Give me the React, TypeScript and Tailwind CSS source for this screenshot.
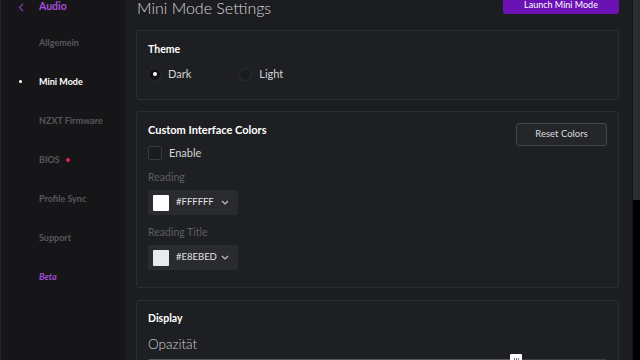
import React from "react";

const NAV = [
  { label: "Allgemein" },
  { label: "Mini Mode", active: true },
  { label: "NZXT Firmware" },
  { label: "BIOS", dot: true },
  { label: "Profile Sync" },
  { label: "Support" },
  { label: "Beta", beta: true },
];

function ColorPicker({ value, swatch }: { value: string; swatch: string }) {
  return (
    <div className="flex items-center h-[25px] w-[90px] bg-[#2a2b2f] rounded-[2px] pl-[5px]">
      <span className="h-[16px] w-[16px] shrink-0 rounded-[1px]" style={{ background: swatch }} />
      <span className="ml-[7px] text-[9.5px] text-[#e2e2e2]">{value}</span>
      <svg className="ml-auto mr-[9px] shrink-0" width="8" height="5" viewBox="0 0 8 5" fill="none">
        <path d="M1 1l3 3 3-3" stroke="#c8c8c8" strokeWidth="1.1" />
      </svg>
    </div>
  );
}

export default function App() {
  return (
    <div
      className="flex h-[360px] w-[640px] overflow-hidden bg-[#1c1d20]"
      style={{ fontFamily: "Lato, 'Open Sans', sans-serif" }}
    >
      {/* Sidebar */}
      <div className="w-[125px] shrink-0 bg-[#161618] border-l border-[#26262a]">
        <div className="flex items-center h-[14px]">
          <svg className="ml-[17px]" width="6" height="9" viewBox="0 0 6 9" fill="none">
            <path d="M5 1L1.5 4.5 5 8" stroke="#7d3bb0" strokeWidth="1.3" />
          </svg>
          <span className="ml-[15px] text-[10.5px] font-bold text-[#a84fdc]">Audio</span>
        </div>
        <div className="mt-[9px] flex flex-col">
          {NAV.map((item) => (
            <div key={item.label} className="relative flex items-center h-[39px] pl-[38px]">
              {item.active && (
                <span className="absolute left-[18px] top-[18px] h-[3px] w-[3px] rounded-full bg-white" />
              )}
              <span
                className={
                  item.active
                    ? "text-[9px] font-bold text-white"
                    : item.beta
                    ? "text-[9px] font-bold italic text-[#a04bd2]"
                    : "text-[9px] font-bold text-[#56585c]"
                }
              >
                {item.label}
              </span>
              {item.dot && <span className="ml-[6px] h-[4px] w-[4px] rounded-full bg-[#e3204d]" />}
            </div>
          ))}
        </div>
      </div>

      {/* Main */}
      <div className="flex-1 pl-[11px] pr-[13px]">
        <div className="-mt-[6px]">
          <div className="flex items-start justify-between h-[26px] mb-[10px]">
            <h1 className="ml-[1px] text-[16px] leading-[28px] font-light text-[#d6d6d6]">Mini Mode Settings</h1>
            <button className="mt-[2px] h-[18px] w-[116px] rounded-[3px] bg-[#6a12b4] text-[9px] text-white">
              Launch Mini Mode
            </button>
          </div>

          {/* Theme */}
          <div className="h-[70px] rounded-[3px] border border-[#2c2d31] bg-[#1e1f22] px-[11px] pt-[11px]">
            <div className="text-[10.5px] leading-[14px] font-bold text-white">Theme</div>
            <div className="mt-[10px] flex items-center h-[16px]">
              <span className="flex items-center justify-center h-[13px] w-[13px] rounded-full bg-[#111113] border border-[#2a2b2e]">
                <span className="h-[4px] w-[4px] rounded-full bg-white" />
              </span>
              <span className="ml-[7px] text-[11px] text-[#d4d4d4]">Dark</span>
              <span className="ml-[48px] h-[13px] w-[13px] rounded-full bg-[#1a1b1d] border border-[#2d2e32]" />
              <span className="ml-[7px] text-[11px] text-[#d4d4d4]">Light</span>
            </div>
          </div>

          {/* Custom Interface Colors */}
          <div className="mt-[11px] h-[177px] rounded-[3px] border border-[#2c2d31] bg-[#1e1f22] px-[11px] pt-[11px]">
            <div className="flex items-start justify-between">
              <div className="text-[11px] leading-[14px] font-bold text-white">Custom Interface Colors</div>
              <button className="h-[23px] w-[91px] rounded-[3px] border border-[#45464a] bg-[#25262a] text-[9.5px] text-[#dadada]">
                Reset Colors
              </button>
            </div>
            <div className="flex items-center h-[14px]">
              <span className="h-[14px] w-[14px] rounded-[2px] border border-[#38393d] bg-[#1a1b1d]" />
              <span className="ml-[7px] text-[11px] text-[#d4d4d4]">Enable</span>
            </div>
            <div className="mt-[10px] text-[10.5px] leading-[14px] text-[#5c5e62]">Reading</div>
            <div className="mt-[6px]">
              <ColorPicker value="#FFFFFF" swatch="#ffffff" />
            </div>
            <div className="mt-[10px] text-[10.5px] leading-[14px] text-[#5c5e62]">Reading Title</div>
            <div className="mt-[6px]">
              <ColorPicker value="#E8EBED" swatch="#e8ebed" />
            </div>
          </div>

          {/* Display */}
          <div className="mt-[12px] h-[80px] rounded-[3px] border border-[#2c2d31] bg-[#1e1f22] px-[11px] pt-[10px]">
            <div className="text-[10.5px] leading-[14px] font-bold text-white">Display</div>
            <div className="mt-[10px] text-[13.5px] leading-[18px] font-light text-[#cfcfcf]">Opazität</div>
            <div className="relative mt-[1px] h-[14px]">
              <div className="absolute left-0 right-0 top-[5px] h-[6px] rounded-[2px] bg-[#3a3c3f]" />
              <div className="absolute left-0 w-[362px] top-[5px] h-[6px] rounded-l-[2px] bg-[#55575b]" />
              <div className="absolute left-[362px] top-0 h-[12px] w-[12px] rounded-[1px] bg-white flex items-center justify-center gap-[1px]">
                <span className="h-[4px] w-[1px] bg-[#777]" />
                <span className="h-[4px] w-[1px] bg-[#777]" />
                <span className="h-[4px] w-[1px] bg-[#777]" />
              </div>
            </div>
          </div>
        </div>
      </div>

      {/* Scrollbar */}
      <div className="w-[8px] shrink-0 bg-black border-l border-[#141416]">
        <div className="h-[200px] bg-[#2b2d31]" />
      </div>
    </div>
  );
}
